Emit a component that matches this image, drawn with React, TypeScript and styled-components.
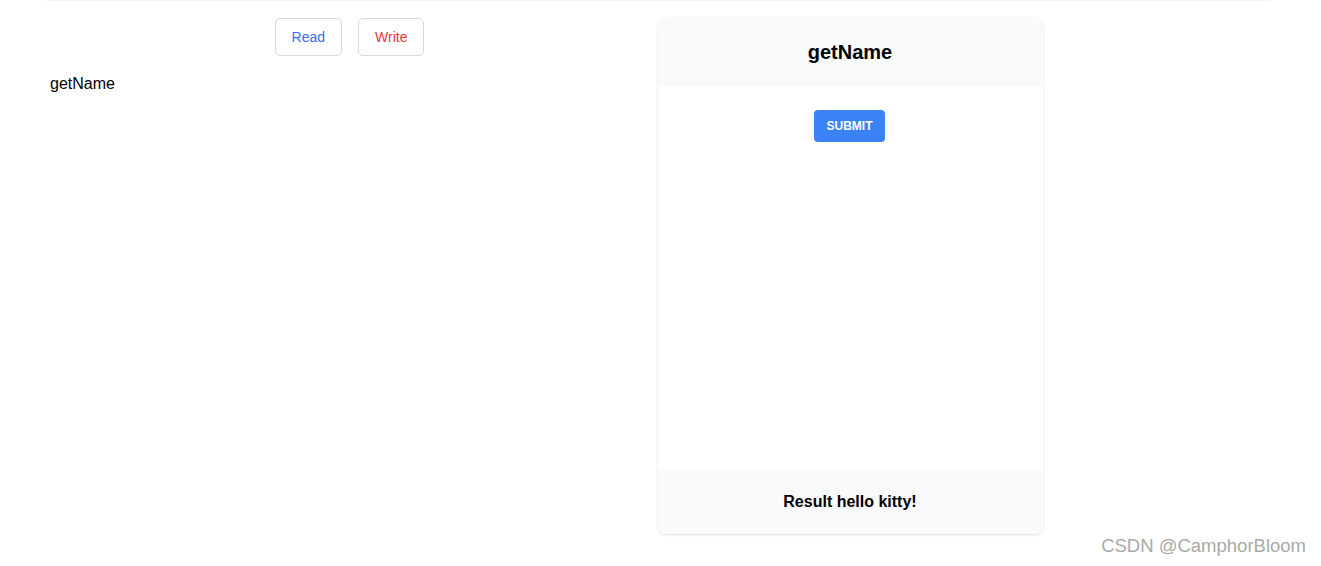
import styled, { createGlobalStyle } from 'styled-components';

const GlobalStyle = createGlobalStyle`
  html, body {
    margin: 0;
    padding: 0;
    background: #ffffff;
    font-family: Arial, "Liberation Sans", sans-serif;
    color: #000;
  }
  * {
    box-sizing: border-box;
  }
`;

const App = () => {
  return (
    <Page>
      <GlobalStyle />
      <TopRule />
      <Main>
        <LeftColumn>
          <ButtonRow>
            <TabButton tone="#3b6cf6">Read</TabButton>
            <TabButton tone="#e5383b">Write</TabButton>
          </ButtonRow>
          <MethodName>getName</MethodName>
        </LeftColumn>
        <Card>
          <CardHeader>getName</CardHeader>
          <CardBody>
            <SubmitButton>Submit</SubmitButton>
          </CardBody>
          <CardFooter>Result hello kitty!</CardFooter>
        </Card>
      </Main>
      <Watermark>CSDN @CamphorBloom</Watermark>
    </Page>
  );
};

export default App;

const Page = styled.div`
  position: relative;
  width: 1321px;
  height: 566px;
  overflow: hidden;
`;
const TopRule = styled.div`
  margin: 0 50px 0 46px;
  height: 1px;
  background-color: #f3f4f6;
`;
const Main = styled.div`
  display: flex;
  gap: 5px;
  margin: 17px 0 0 46px;
`;
const LeftColumn = styled.div`
  width: 607px;
  display: flex;
  flex-direction: column;
`;
const ButtonRow = styled.div`
  display: flex;
  justify-content: center;
  gap: 16px;
`;
const TabButton = styled.button<{ tone: string }>`
  height: 38px;
  padding: 0 16px;
  border: 1px solid #d6d6de;
  border-radius: 5px;
  background: #ffffff;
  color: ${(props) => props.tone};
  font-family: Arial, "Liberation Sans", sans-serif;
  font-size: 14px;
  cursor: pointer;
`;
const MethodName = styled.div`
  margin: 19px 0 0 4px;
  font-size: 16px;
`;
const Card = styled.div`
  width: 385px;
  height: 516px;
  display: flex;
  flex-direction: column;
  border-radius: 8px;
  overflow: hidden;
  background: #ffffff;
  box-shadow: 0 1px 3px rgba(0, 0, 0, 0.12), 0 0 1px rgba(0, 0, 0, 0.08);
`;
const CardHeader = styled.div`
  height: 68px;
  display: flex;
  align-items: center;
  justify-content: center;
  padding-right: 1px;
  background-color: #f9fafb;
  font-size: 20px;
  font-weight: bold;
`;
const CardBody = styled.div`
  flex: 1;
  display: flex;
  justify-content: center;
  align-items: flex-start;
  padding: 24px 2px 0 0;
`;
const SubmitButton = styled.button`
  height: 32px;
  width: 71px;
  border: none;
  border-radius: 4px;
  background-color: #3b82f6;
  color: #ffffff;
  font-family: Arial, "Liberation Sans", sans-serif;
  font-size: 12px;
  font-weight: bold;
  text-transform: uppercase;
  cursor: pointer;
`;
const CardFooter = styled.div`
  height: 64px;
  display: flex;
  align-items: center;
  justify-content: center;
  padding-right: 1px;
  background-color: #f9fafb;
  font-size: 16px;
  font-weight: bold;
`;
const Watermark = styled.div`
  position: absolute;
  right: 15px;
  top: 535px;
  font-size: 18.5px;
  color: #a9a9a9;
`;
